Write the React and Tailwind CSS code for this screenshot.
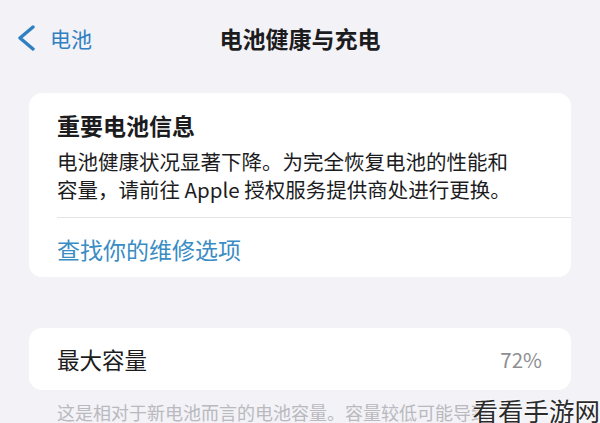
export default function App() {
  const font = { fontFamily: '"Noto Sans CJK SC", "Noto Sans", sans-serif' };

  return (
    <div
      className="relative w-[600px] h-[423px] overflow-hidden bg-[#f2f2f7] text-[#1c1c1e]"
      style={font}
    >
      {/* nav bar */}
      <div className="grid grid-cols-[1fr_auto_1fr] items-center h-[76px] px-[17px]">
        <div className="flex items-center gap-[14px] text-[#2f7fc1]">
          <svg width="19" height="26" viewBox="0 0 19 26" fill="none">
            <polyline
              points="16,2 3,13 16,24"
              stroke="currentColor"
              strokeWidth="3.4"
              strokeLinecap="round"
              strokeLinejoin="round"
            />
          </svg>
          <span className="text-[21px] leading-none">电池</span>
        </div>
        <div className="text-[23px] font-semibold leading-none text-center">电池健康与充电</div>
        <div></div>
      </div>

      {/* important battery message */}
      <div className="mx-[29px] mt-[17px] bg-white rounded-[13px] pt-4 pb-3">
        <div className="pl-[28px] pr-[24px]">
          <div className="text-[23px] font-semibold leading-[32px]">重要电池信息</div>
          <div className="mt-[6px] text-[20.5px] leading-[28px]">
            电池健康状况显著下降。为完全恢复电池的性能和
            <br />
            容量，请前往 Apple 授权服务提供商处进行更换。
          </div>
        </div>
        <div className="ml-[28px] mt-[14px] h-px bg-[#e3e3e8]"></div>
        <div className="pl-[28px] mt-[15px] text-[23px] leading-[32px] text-[#3a8cc4]">
          查找你的维修选项
        </div>
      </div>

      {/* max capacity */}
      <div className="mx-[29px] mt-[51px] h-[62px] bg-white rounded-[13px] flex items-center justify-between pl-[28px] pr-[29px]">
        <span className="text-[22.5px] leading-none">最大容量</span>
        <span className="text-[20.5px] leading-none text-[#8e8e93]">72%</span>
      </div>

      <div className="pl-[57px] pr-[40px] mt-[9px] text-[18px] leading-[26px] text-[#b9b9be]">
        这是相对于新电池而言的电池容量。容量较低可能导致
      </div>

      {/* watermark */}
      <div className="absolute right-0 bottom-[-3px] text-[25.5px] leading-[32px] text-[#2b2b2b] pl-1 [text-shadow:0_0_3px_#fff,0_0_3px_#fff]">
        看看手游网
      </div>
    </div>
  );
}
